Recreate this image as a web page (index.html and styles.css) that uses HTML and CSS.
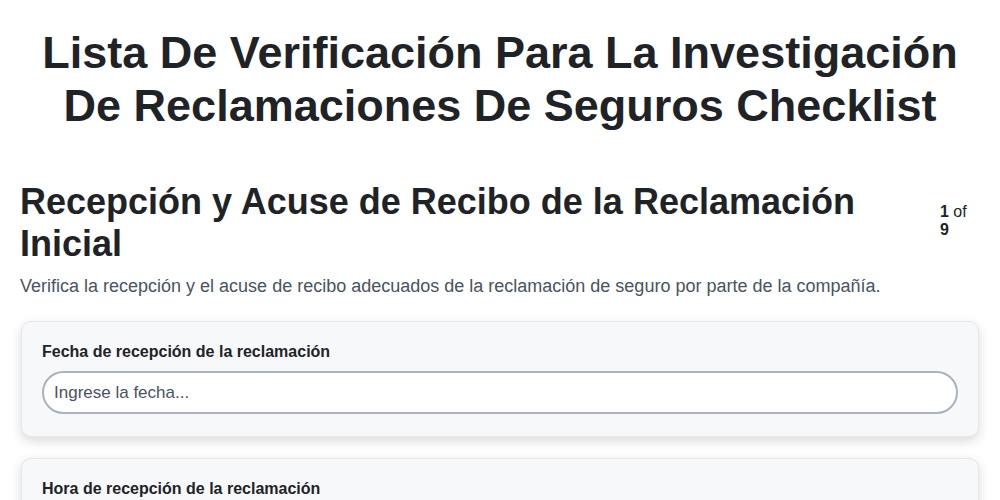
FILE: index.html
```html
<!DOCTYPE html>
<html lang="es">
<head>
<meta charset="utf-8">
<title>Checklist</title>
<link rel="stylesheet" href="styles.css">
</head>
<body>
<div class="page">
  <h1 class="title">Lista De Verificación Para La Investigación De Reclamaciones De Seguros Checklist</h1>
  <div class="section-head">
    <h2 class="section-title">Recepción y Acuse de Recibo de la Reclamación Inicial</h2>
    <div class="counter"><b>1</b> of <b>9</b></div>
  </div>
  <p class="section-desc">Verifica la recepción y el acuse de recibo adecuados de la reclamación de seguro por parte de la compañía.</p>
  <div class="card">
    <label class="field-label">Fecha de recepción de la reclamación</label>
    <input class="field-input" type="text" placeholder="Ingrese la fecha...">
  </div>
  <div class="card">
    <label class="field-label">Hora de recepción de la reclamación</label>
    <input class="field-input" type="text" placeholder="Ingrese la hora...">
  </div>
</div>
</body>
</html>
```
FILE: styles.css
```css
html, body {
  margin: 0;
  padding: 0;
  background: #ffffff;
}
body {
  font-family: "Liberation Sans", Arial, sans-serif;
  color: #1f2328;
}
.page {
  padding: 26px 20px 0 20px;
}
.title {
  margin: 0 0 49px 0;
  text-align: center;
  font-size: 45px;
  line-height: 53px;
  font-weight: 700;
  color: #1f2328;
}
.section-head {
  display: flex;
  align-items: flex-start;
  gap: 20px;
}
.section-title {
  flex: 1;
  margin: 0;
  font-size: 36px;
  line-height: 42px;
  font-weight: 700;
  color: #1f2328;
}
.counter {
  width: 40px;
  margin-top: 22px;
  font-size: 16px;
  line-height: 18px;
  color: #1f2328;
}
.section-desc {
  margin: 8px 0 22px 0;
  font-size: 18px;
  line-height: 26px;
  color: #4a5360;
}
.card {
  background: #f7f8fa;
  border: 1px solid #e6e8ec;
  border-radius: 10px;
  box-shadow: 0 4px 12px rgba(0, 0, 0, 0.15);
  padding: 20px 20px 22px 20px;
  margin: 0 1px 21px 1px;
}
.field-label {
  display: block;
  font-size: 16px;
  line-height: 20px;
  font-weight: 700;
  color: #1f2328;
  margin-bottom: 9px;
}
.field-input {
  display: block;
  box-sizing: border-box;
  width: 100%;
  height: 43px;
  border: 2px solid #aab2bb;
  border-radius: 22px;
  background: #ffffff;
  padding: 0 10px;
  font-family: "Liberation Sans", Arial, sans-serif;
  font-size: 17px;
  color: #1f2328;
  outline: none;
}
.field-input::placeholder {
  color: #4a5360;
  opacity: 1;
}
```
